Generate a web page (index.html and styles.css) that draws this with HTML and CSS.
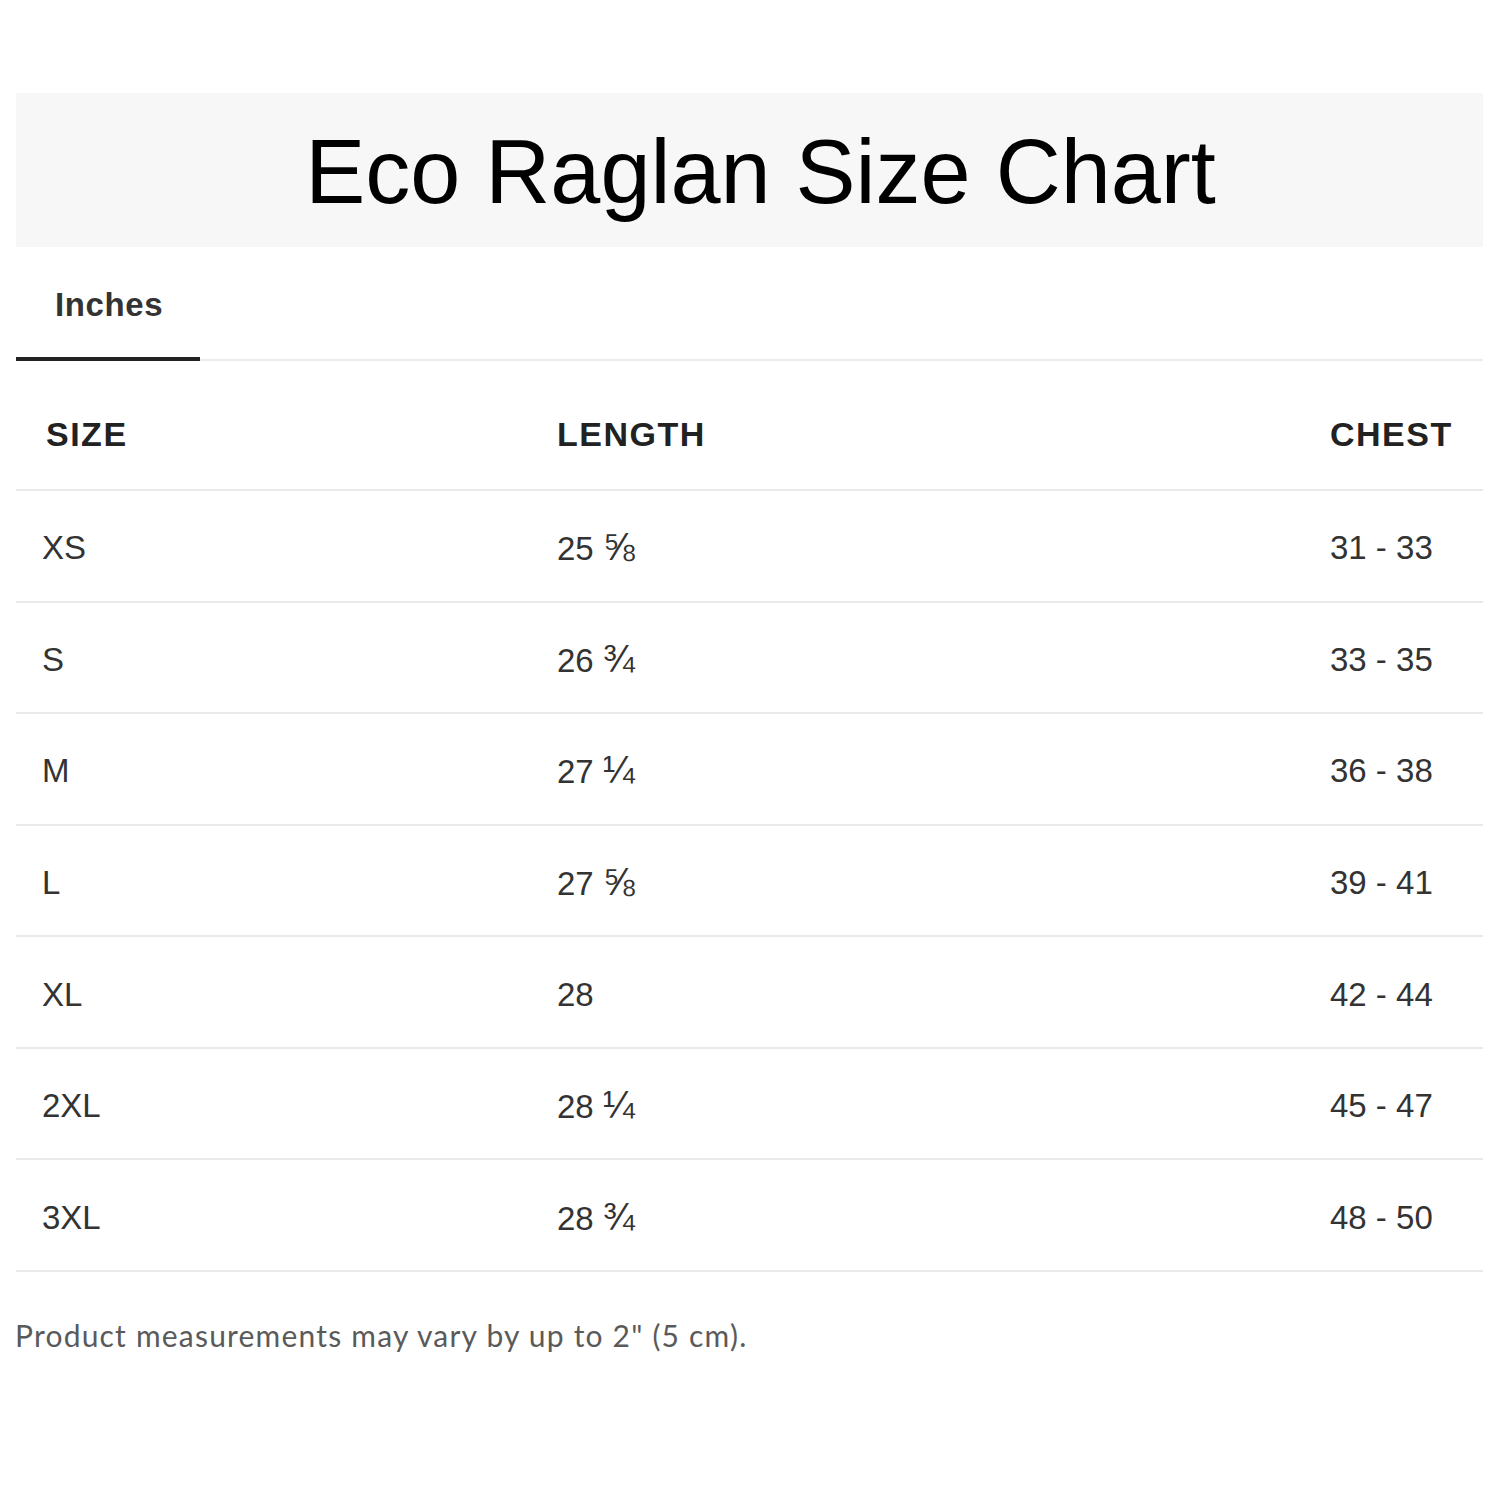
FILE: index.html
```html
<!DOCTYPE html>
<html lang="en">
<head>
<meta charset="utf-8">
<title>Eco Raglan Size Chart</title>
<link rel="stylesheet" href="styles.css">
</head>
<body>
<div class="page">
  <header class="banner">
    <h1 class="title">Eco Raglan Size Chart</h1>
  </header>
  <nav class="tabs">
    <div class="tab active">Inches</div>
  </nav>
  <div class="chart">
    <div class="row head">
      <div class="cell c-size">SIZE</div>
      <div class="cell c-len">LENGTH</div>
      <div class="cell c-chest">CHEST</div>
    </div>
    <div class="row"><div class="cell c-size">XS</div><div class="cell c-len">25 <span class="frac">⅝</span></div><div class="cell c-chest">31 - 33</div></div>
    <div class="row"><div class="cell c-size">S</div><div class="cell c-len">26 <span class="frac">¾</span></div><div class="cell c-chest">33 - 35</div></div>
    <div class="row"><div class="cell c-size">M</div><div class="cell c-len">27 <span class="frac">¼</span></div><div class="cell c-chest">36 - 38</div></div>
    <div class="row"><div class="cell c-size">L</div><div class="cell c-len">27 <span class="frac">⅝</span></div><div class="cell c-chest">39 - 41</div></div>
    <div class="row"><div class="cell c-size">XL</div><div class="cell c-len">28</div><div class="cell c-chest">42 - 44</div></div>
    <div class="row"><div class="cell c-size">2XL</div><div class="cell c-len">28 <span class="frac">¼</span></div><div class="cell c-chest">45 - 47</div></div>
    <div class="row"><div class="cell c-size">3XL</div><div class="cell c-len">28 <span class="frac">¾</span></div><div class="cell c-chest">48 - 50</div></div>
  </div>
  <p class="note">Product measurements may vary by up to 2" (5 cm).</p>
</div>
</body>
</html>
```
FILE: styles.css
```css
html, body {
  margin: 0;
  padding: 0;
  background: #ffffff;
}

.page {
  padding: 93px 17px 0 16px;
  font-family: "Liberation Sans", Arial, sans-serif;
}

.banner {
  background: #f7f7f7;
  height: 154px;
  display: flex;
  align-items: center;
  justify-content: center;
  padding-left: 22px;
}

.title {
  margin: 0;
  font-family: "Liberation Sans", Arial, sans-serif;
  font-weight: 400;
  font-size: 90px;
  line-height: 1;
  color: #000;
  padding-top: 4px;
}

.tabs {
  display: flex;
  border-bottom: 2px solid #ebebeb;
  height: 112px;
}

.tab {
  width: 184px;
  box-sizing: border-box;
  padding: 39px 0 0 39px;
  font-size: 33px;
  font-weight: 700;
  color: #333;
  letter-spacing: 0.6px;
}

.tab.active {
  border-bottom: 4px solid #222;
  margin-bottom: -2px;
}

.chart {
  display: flex;
  flex-direction: column;
}

.row {
  display: grid;
  grid-template-columns: 541px 773px 1fr;
  align-items: center;
  height: 109.57px;
  border-bottom: 2px solid #e9e9e9;
  color: #333;
  font-size: 33px;
}

.row .cell {
  padding-top: 5px;
}

.row.head {
  height: 128px;
  align-items: start;
}

.row.head .cell {
  padding-top: 54px;
  font-weight: 700;
  font-size: 34px;
  letter-spacing: 1.5px;
  color: #222;
}

.frac {
  font-size: 38px;
  line-height: 1;
}

.c-size {
  padding-left: 26px;
}

.row.head .c-size {
  padding-left: 30px;
}

.note {
  margin: 45px 0 0 -1px;
  font-family: Lato, "Liberation Sans", sans-serif;
  font-size: 30px;
  letter-spacing: 1.2px;
  color: #5a5a5a;
}
```
